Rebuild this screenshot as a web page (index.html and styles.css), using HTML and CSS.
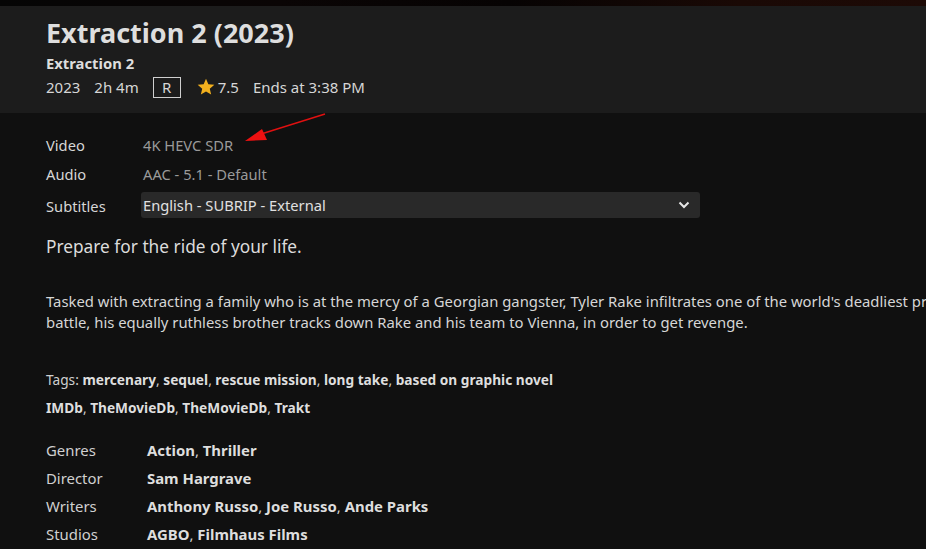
FILE: index.html
```html
<!DOCTYPE html>
<html lang="en">
<head>
<meta charset="utf-8">
<title>Extraction 2 (2023)</title>
<link rel="stylesheet" href="styles.css">
</head>
<body>
<div class="strip"></div>
<header class="header">
  <h1 class="title">Extraction 2 (2023)</h1>
  <div class="original">Extraction 2</div>
  <div class="meta">
    <span>2023</span>
    <span>2h 4m</span>
    <span class="rating">R</span>
    <span class="score"><svg class="star" viewBox="0 0 24 24" width="20" height="20"><path d="M12 17.27L18.18 21l-1.64-7.03L22 9.24l-7.19-.61L12 2 9.19 8.63 2 9.24l5.46 4.73L5.82 21z" fill="#f2b01e"/></svg>7.5</span>
    <span>Ends at 3:38 PM</span>
  </div>
</header>
<main class="content">
  <div class="media">
    <div class="mlabel">Video</div><div class="mvalue">4K HEVC SDR</div>
    <div class="mlabel">Audio</div><div class="mvalue">AAC - 5.1 - Default</div>
    <div class="mlabel tall">Subtitles</div>
    <div class="select"><span>English - SUBRIP - External</span><svg class="chev" viewBox="0 0 12 8" width="12" height="8"><path d="M1.5 1.5L6 6l4.5-4.5" fill="none" stroke="#e6e6e6" stroke-width="2"/></svg></div>
  </div>
  <p class="tagline">Prepare for the ride of your life.</p>
  <p class="overview">Tasked with extracting a family who is at the mercy of a Georgian gangster, Tyler Rake infiltrates one of the world's deadliest prisons in order to save them. But when the extraction gets hot, and the gangster dies in the heat of<br>battle, his equally ruthless brother tracks down Rake and his team to Vienna, in order to get revenge.</p>
  <p class="tags">Tags: <b>mercenary</b>, <b>sequel</b>, <b>rescue mission</b>, <b>long take</b>, <b>based on graphic novel</b></p>
  <p class="links"><b>IMDb</b>, <b>TheMovieDb</b>, <b>TheMovieDb</b>, <b>Trakt</b></p>
  <div class="details">
    <div class="dlabel">Genres</div><div class="dvalue"><b>Action</b>, <b>Thriller</b></div>
    <div class="dlabel">Director</div><div class="dvalue"><b>Sam Hargrave</b></div>
    <div class="dlabel">Writers</div><div class="dvalue"><b>Anthony Russo</b>, <b>Joe Russo</b>, <b>Ande Parks</b></div>
    <div class="dlabel">Studios</div><div class="dvalue"><b>AGBO</b>, <b>Filmhaus Films</b></div>
  </div>
</main>
<svg class="arrow" width="926" height="549" viewBox="0 0 926 549">
  <line x1="325" y1="114" x2="258" y2="135" stroke="#e01010" stroke-width="1.5"/>
  <polygon points="245,141 262,129 267,140" fill="#ee1111"/>
</svg>
</body>
</html>
```
FILE: styles.css
```css
html, body {
  margin: 0;
  padding: 0;
}
body {
  background: #101010;
  color: #dcdcdc;
  font-family: "Noto Sans", "Open Sans", sans-serif;
  width: 926px;
  height: 549px;
  overflow: hidden;
  position: relative;
}
.strip {
  height: 6px;
  background: linear-gradient(90deg, #050505 0%, #0a0505 30%, #060303 55%, #1a0905 80%, #1d0a06 100%);
}
.header {
  background: #1c1c1c;
  height: 107px;
  box-sizing: border-box;
  padding: 11px 46px 0;
}
.title {
  margin: 0;
  font-size: 27px;
  font-weight: 700;
  line-height: 32px;
  color: #dedede;
}
.original {
  margin-top: 4px;
  font-size: 14.8px;
  font-weight: 700;
  line-height: 20px;
  color: #dedede;
}
.meta {
  display: flex;
  align-items: center;
  gap: 14px;
  margin-top: 3px;
  font-size: 15px;
  line-height: 22px;
  color: #d6d6d6;
}
.rating {
  border: 1px solid #cfcfcf;
  width: 26px;
  height: 19px;
  display: flex;
  align-items: center;
  justify-content: center;
  line-height: 19px;
}
.score {
  display: flex;
  align-items: center;
  gap: 2px;
  margin-left: 1px;
}
.content {
  padding: 0 46px;
}
.media {
  display: grid;
  grid-template-columns: 95px 559px;
  grid-template-rows: 29px 29px 32px;
  align-items: center;
  padding-top: 18px;
  font-size: 14.7px;
}
.mlabel {
  color: #d6d6d6;
  line-height: 29px;
}
.mlabel.tall {
  padding-top: 2px;
}
.mvalue {
  color: #9a9a9a;
  line-height: 29px;
  padding-left: 2px;
}
.select {
  background: #292929;
  border-radius: 3px;
  height: 26px;
  display: flex;
  align-items: center;
  justify-content: space-between;
  padding: 0 10px 0 2px;
  color: #e0e0e0;
}
.chev {
  display: block;
}
.tagline {
  margin: 13px 0 0;
  font-size: 17.3px;
  line-height: 26px;
  color: #dcdcdc;
}
.overview {
  margin: 31px 0 0;
  white-space: nowrap;
  font-size: 14.85px;
  line-height: 21px;
  color: #d6d6d6;
}
.tags {
  margin: 37px 0 0;
  font-size: 13.7px;
  line-height: 20px;
  color: #cfcfcf;
}
.tags b, .links b, .dvalue b {
  color: #dedede;
  font-weight: 700;
}
.links {
  margin: 8px 0 0;
  font-size: 13.7px;
  line-height: 20px;
  color: #cfcfcf;
}
.details {
  display: grid;
  grid-template-columns: 101px auto;
  margin-top: 18px;
  font-size: 14.9px;
  line-height: 28px;
}
.dlabel {
  color: #d0d0d0;
}
.dvalue {
  color: #cfcfcf;
}
.arrow {
  position: absolute;
  left: 0;
  top: 0;
  pointer-events: none;
}
```
